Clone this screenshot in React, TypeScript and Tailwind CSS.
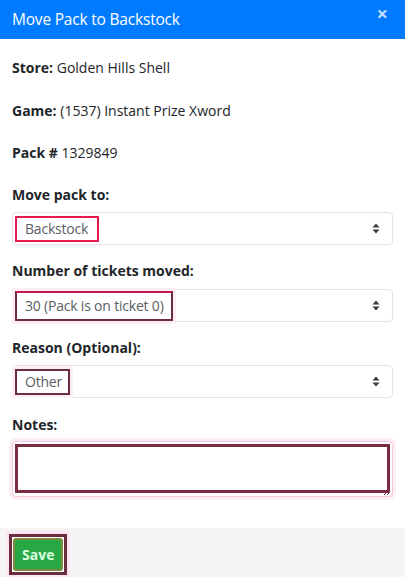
import React from "react";

function Chevrons() {
  return (
    <svg width="8" height="11" viewBox="0 0 8 11" className="shrink-0">
      <path d="M0.5 4.5 L4 0.5 L7.5 4.5 Z" fill="#343a40" />
      <path d="M0.5 6.5 L4 10.5 L7.5 6.5 Z" fill="#343a40" />
    </svg>
  );
}

function FakeSelect({
  value,
  boxClass,
}: {
  value: string;
  boxClass: string;
}) {
  return (
    <div className="h-[33px] w-full rounded-[4px] border border-[#dfe2e6] bg-white flex items-center pl-[2px] pr-[12px]">
      <div className={`h-[26px] flex items-center pl-[8px] whitespace-nowrap text-[14px] tracking-[-0.2px] text-[#5a6066] ${boxClass}`}>
        {value}
      </div>
      <div className="flex-1" />
      <Chevrons />
    </div>
  );
}

export default function App() {
  return (
    <div
      className="w-[405px] h-[577px] bg-white flex flex-col overflow-hidden"
      style={{ fontFamily: '"Open Sans", "Noto Sans", sans-serif' }}
    >
      {/* Header */}
      <div className="h-[39px] bg-[#007bff] flex items-center px-3 shrink-0 relative">
        <h1 className="text-[15.5px] text-white tracking-[-0.2px]">Move Pack to Backstock</h1>
        <span className="absolute right-[17px] top-[4px] text-[20px] font-bold leading-none text-[#c3dcff]">×</span>
      </div>

      {/* Body */}
      <div className="flex-1 px-3 pt-[17px] text-[14px] text-[#212529]">
        <p className="leading-[24px] mb-[18.5px]">
          <span className="font-bold">Store:</span> Golden Hills Shell
        </p>
        <p className="leading-[24px] mb-[18.5px]">
          <span className="font-bold">Game:</span> (1537) Instant Prize Xword
        </p>
        <p className="leading-[24px] mb-[18px]">
          <span className="font-bold">Pack #</span> 1329849
        </p>

        <div className="leading-[24px] font-bold mb-[5px]">Move pack to:</div>
        <FakeSelect value="Backstock" boxClass="w-[84px] border-2 border-[#e51a4f]" />

        <div className="leading-[24px] font-bold mt-[14px] mb-[6px]">Number of tickets moved:</div>
        <FakeSelect
          value="30 (Pack is on ticket 0)"
          boxClass="w-[158px] h-[30px] border-2 border-[#6e2d3b] border-t-[#c2184a] shadow-[0_0_0_3px_#fdeef6]"
        />

        <div className="leading-[24px] font-bold mt-[14px] mb-[5px]">Reason (Optional):</div>
        <FakeSelect
          value="Other"
          boxClass="w-[55px] h-[25px] border-2 border-[#6e2d3b] shadow-[0_0_0_3px_#fdeef6]"
        />

        <div className="leading-[24px] font-bold mt-[15px] mb-[4px]">Notes:</div>
        <div className="h-[56px] w-full rounded-[4px] border border-[#f5c6e0] bg-white p-[2px] shadow-[0_0_0_3px_#fdeef6] relative">
          <div className="h-[49px] w-full border-[3px] border-[#7a2d40] bg-white" />
          <svg width="8" height="6" viewBox="0 0 8 6" className="absolute right-[1px] bottom-[0px]">
            <path d="M1 5 L6 0 M4 5 L7 2" stroke="#7a2d40" strokeWidth="1" />
          </svg>
        </div>
      </div>

      {/* Footer */}
      <div className="h-[49px] bg-[#f5f5f5] shrink-0 flex items-start pl-[9px] pt-[6px]">
        <div className="border-[3px] border-[#6b2d3c] bg-white p-[1px] shadow-[0_0_0_3px_#fde6f3]">
          <button className="h-[33px] px-[7px] bg-[#28a745] border-2 border-[#7f8a3f] rounded-[3px] text-[14px] font-bold text-[#d9ffe0] leading-none">
            Save
          </button>
        </div>
      </div>
    </div>
  );
}
